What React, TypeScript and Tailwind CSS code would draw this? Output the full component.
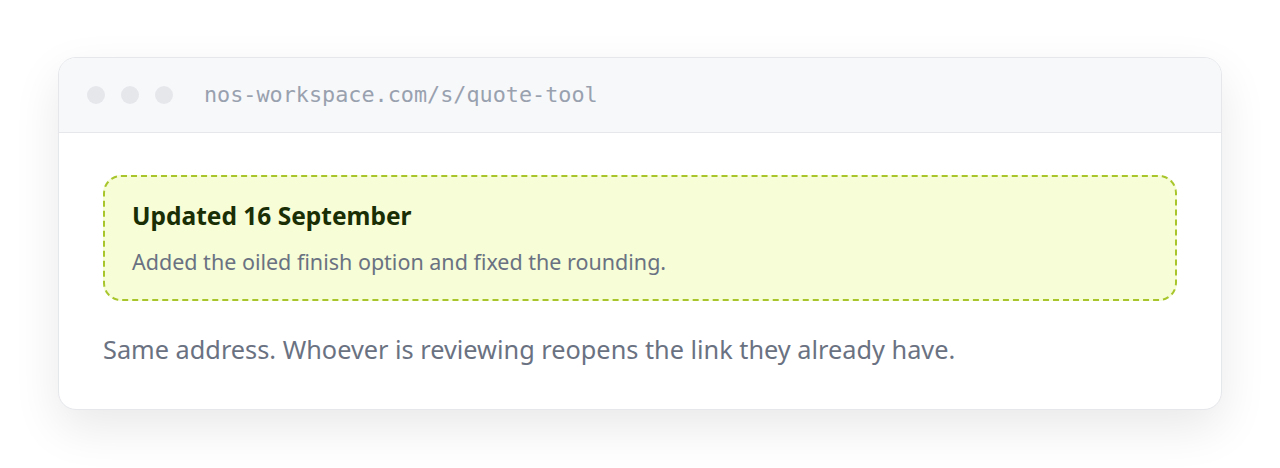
export default function App() {
  return (
    <div className="min-h-[468px] bg-white px-[58px] py-[57px]" style={{ fontFamily: '"Noto Sans", "Open Sans", sans-serif' }}>
      <div className="overflow-hidden rounded-[18px] border border-gray-200 bg-white shadow-[0_18px_48px_rgba(0,0,0,0.09)]">
        {/* Browser bar */}
        <div className="flex h-[75px] items-center border-b border-gray-200 bg-[#f7f8fa] pl-[28px]">
          <div className="flex gap-4">
            <span className="h-[18px] w-[18px] rounded-full bg-gray-200" />
            <span className="h-[18px] w-[18px] rounded-full bg-gray-200" />
            <span className="h-[18px] w-[18px] rounded-full bg-gray-200" />
          </div>
          <span className="ml-[31px] text-[21.8px] text-gray-400" style={{ fontFamily: '"DejaVu Sans Mono", monospace' }}>
            nos-workspace.com/s/quote-tool
          </span>
        </div>

        {/* Content */}
        <div className="px-[44px] pb-[43px] pt-[42px]">
          <div className="rounded-[18px] border-2 border-dashed border-[#a8c62c] bg-[#f6fdd7] px-[27px] pb-[23px] pt-[24px]">
            <h2 className="text-[24.5px] font-bold leading-[30px] text-[#1a2e05]">Updated 16 September</h2>
            <p className="mt-[17px] text-[21.5px] leading-[28px] text-gray-500">
              Added the oiled finish option and fixed the rounding.
            </p>
          </div>
          <p className="mt-[31px] text-[25.3px] leading-[34px] text-gray-500">
            Same address. Whoever is reviewing reopens the link they already have.
          </p>
        </div>
      </div>
    </div>
  );
}
